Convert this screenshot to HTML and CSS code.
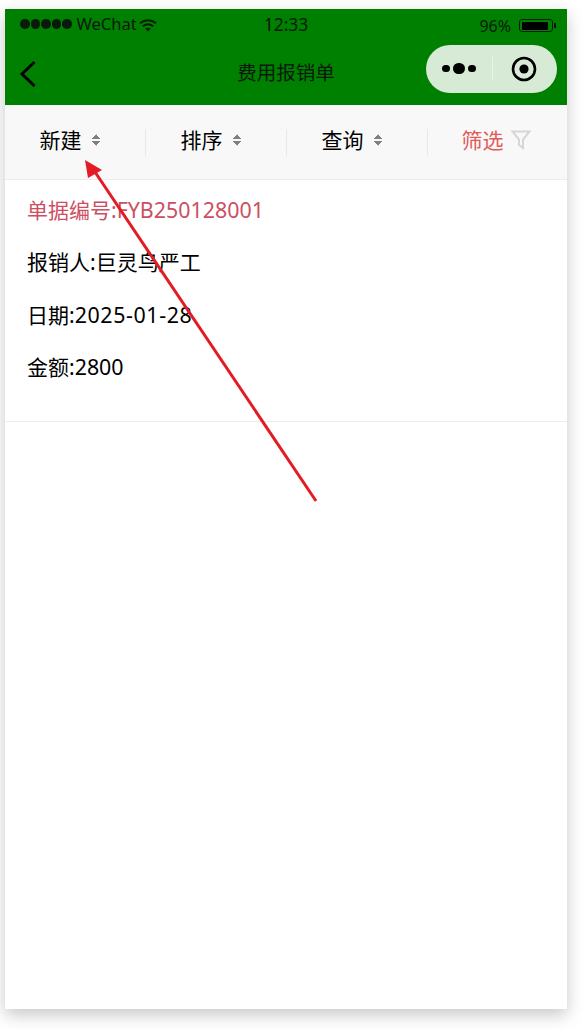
FILE: index.html
```html
<!DOCTYPE html>
<html lang="zh-CN">
<head>
  <meta charset="UTF-8">
  <title>费用报销单</title>
  <link rel="stylesheet" href="styles.css">
</head>
<body>
  <div class="phone">
    <div class="header">
      <div class="status">
        <div class="status-left">
          <span class="signal"><i></i><i></i><i></i><i></i><i></i></span>
          <span class="carrier">WeChat</span>
          <svg class="wifi" width="18" height="13" viewBox="0 0 18 13">
            <path d="M1 4.2C5.8 .4 12.2 .4 17 4.2" fill="none" stroke="#0a1a0a" stroke-width="2"/>
            <path d="M3.8 7.2C7 4.8 11 4.8 14.2 7.2" fill="none" stroke="#0a1a0a" stroke-width="2"/>
            <path d="M6.2 9.6C8 8.4 10 8.4 11.8 9.6L9 12.6Z" fill="#0a1a0a"/>
          </svg>
        </div>
        <div class="time">12:33</div>
        <div class="status-right">
          <span class="percent">96%</span>
          <span class="battery"><i></i></span>
          <span class="battery-tip"></span>
        </div>
      </div>
      <div class="nav">
        <div class="nav-left">
          <svg class="back" width="18" height="28" viewBox="0 0 18 28">
            <path d="M15.5 2L3 14l12.5 12" fill="none" stroke="#000" stroke-width="3"/>
          </svg>
        </div>
        <div class="title">费用报销单</div>
        <div class="nav-right">
          <div class="capsule">
            <div class="dots"><i></i><i class="big"></i><i></i></div>
            <div class="capsule-line"></div>
            <svg class="target" width="26" height="26" viewBox="0 0 26 26">
              <circle cx="13" cy="13" r="11" fill="none" stroke="#000" stroke-width="2.6"/>
              <circle cx="13" cy="13" r="4.6" fill="#000"/>
            </svg>
          </div>
        </div>
      </div>
    </div>

    <div class="toolbar">
      <div class="tool">新建<span class="sort"></span></div>
      <div class="tool">排序<span class="sort"></span></div>
      <div class="tool">查询<span class="sort"></span></div>
      <div class="tool filter">筛选
        <svg class="funnel" width="20" height="20" viewBox="0 0 20 20">
          <path d="M1.500 1.500h17l-6.500 8v8.500l-4-3v-5.500z" fill="none" stroke="#d6d6d6" stroke-width="2"/>
        </svg>
      </div>
    </div>

    <div class="card">
      <div class="row row-no">单据编号:<span class="num">FYB250128001</span></div>
      <div class="row">报销人:巨灵鸟严工</div>
      <div class="row">日期:<span class="num date">2025-01-28</span></div>
      <div class="row">金额:<span class="num">2800</span></div>
    </div>
  </div>

  <svg class="arrow" width="588" height="1029" viewBox="0 0 588 1029">
    <path d="M316 501L95 172" stroke="#e21b24" stroke-width="3" fill="none"/>
    <path d="M85 160L102 170L88 178Z" fill="#e21b24"/>
  </svg>
</body>
</html>
```

FILE: styles.css
```css
html, body {
  margin: 0;
  height: 100%;
}
body {
  position: relative;
  background: white;
  font-family: "Noto Sans", "Noto Sans CJK SC", sans-serif;
  padding: 9px 21px 0 5px;
  box-sizing: border-box;
  overflow: hidden;
}
.phone {
  height: 1000px;
  background: white;
  box-shadow: 0 6px 16px rgba(0, 0, 0, 0.22);
  display: flex;
  flex-direction: column;
}
.header {
  height: 96px;
  background: #008000;
}
.status {
  height: 30px;
  padding: 0 11px;
  display: grid;
  grid-template-columns: 1fr auto 1fr;
  align-items: center;
  color: #0a1a0a;
}
.status-left, .status-right {
  display: flex;
  align-items: center;
}
.status-right {
  justify-content: flex-end;
  padding-top: 3px;
}
.signal {
  display: flex;
  gap: 1px;
  margin: 0 5px 0 4px;
}
.signal i {
  width: 9.5px;
  height: 9.5px;
  border-radius: 50%;
  background: #0a1a0a;
}
.carrier {
  font-size: 16.5px;
  line-height: 30px;
  margin-right: 2px;
}
.wifi {
  margin-top: 2px;
}
.time {
  font-size: 17.5px;
}
.percent {
  font-size: 16px;
  margin-right: 8px;
}
.battery {
  width: 34px;
  height: 13px;
  border: 1.5px solid #0a1a0a;
  border-radius: 3px;
  padding: 1.5px;
  box-sizing: border-box;
  display: flex;
}
.battery i {
  width: 92%;
  background: #000;
  border-radius: 1px;
}
.battery-tip {
  width: 2px;
  height: 5px;
  background: #0a1a0a;
  margin-left: 1px;
}
.nav {
  height: 66px;
  padding: 0 10px;
  display: grid;
  grid-template-columns: 1fr auto 1fr;
  align-items: center;
}
.nav-left {
  display: flex;
  margin: 4px 0 0 4px;
}
.nav-right {
  display: flex;
  justify-content: flex-end;
}
.title {
  font-size: 19.5px;
  color: #0a1a0a;
  margin-top: -2px;
}
.capsule {
  width: 131px;
  height: 48px;
  margin-top: -7px;
  border-radius: 24px;
  background: #d6ead6;
  display: flex;
  align-items: center;
}
.dots {
  width: 66px;
  display: flex;
  justify-content: center;
  align-items: center;
  gap: 3.5px;
}
.dots i {
  width: 7.5px;
  height: 7.5px;
  border-radius: 50%;
  background: #000;
}
.dots i.big {
  width: 11.5px;
  height: 11.5px;
}
.capsule-line {
  width: 1px;
  height: 24px;
  background: #e6f3e6;
}
.target {
  margin-left: 18px;
}
.toolbar {
  height: 75px;
  background: #f8f8f8;
  border-bottom: 1px solid #ececec;
  box-sizing: border-box;
  display: grid;
  grid-template-columns: repeat(4, 141px);
  align-items: center;
}
.tool {
  height: 20px;
  border-right: 1px solid #e8e8e8;
  display: flex;
  align-items: center;
  justify-content: center;
  font-size: 21px;
  color: #000;
  padding: 0 10px 7px 0;
}
.tool.filter {
  border-right: none;
  color: #e05a5a;
  padding-right: 5px;
}
.sort {
  display: inline-block;
  width: 9px;
  height: 14px;
  margin: 3px 0 0 10px;
  background:
    linear-gradient(to bottom right, transparent 50%, #808080 50%) 0 1px / 4.5px 5px no-repeat,
    linear-gradient(to bottom left, transparent 50%, #808080 50%) 4.5px 1px / 4.5px 5px no-repeat,
    linear-gradient(to top right, transparent 50%, #808080 50%) 0 8px / 4.5px 5px no-repeat,
    linear-gradient(to top left, transparent 50%, #808080 50%) 4.5px 8px / 4.5px 5px no-repeat;
}
.funnel {
  margin: 3px 0 0 7px;
}
.card {
  padding: 3.5px 22px 27.5px;
  border-bottom: 1px solid #ececec;
}
.row {
  font-size: 21px;
  line-height: 52.5px;
  color: #000;
}
.row-no {
  color: #cc4f63;
}
.num {
  font-size: 21.4px;
}
.date {
  letter-spacing: 0.6px;
}
.arrow {
  position: absolute;
  left: 0;
  top: 0;
  pointer-events: none;
}
```
